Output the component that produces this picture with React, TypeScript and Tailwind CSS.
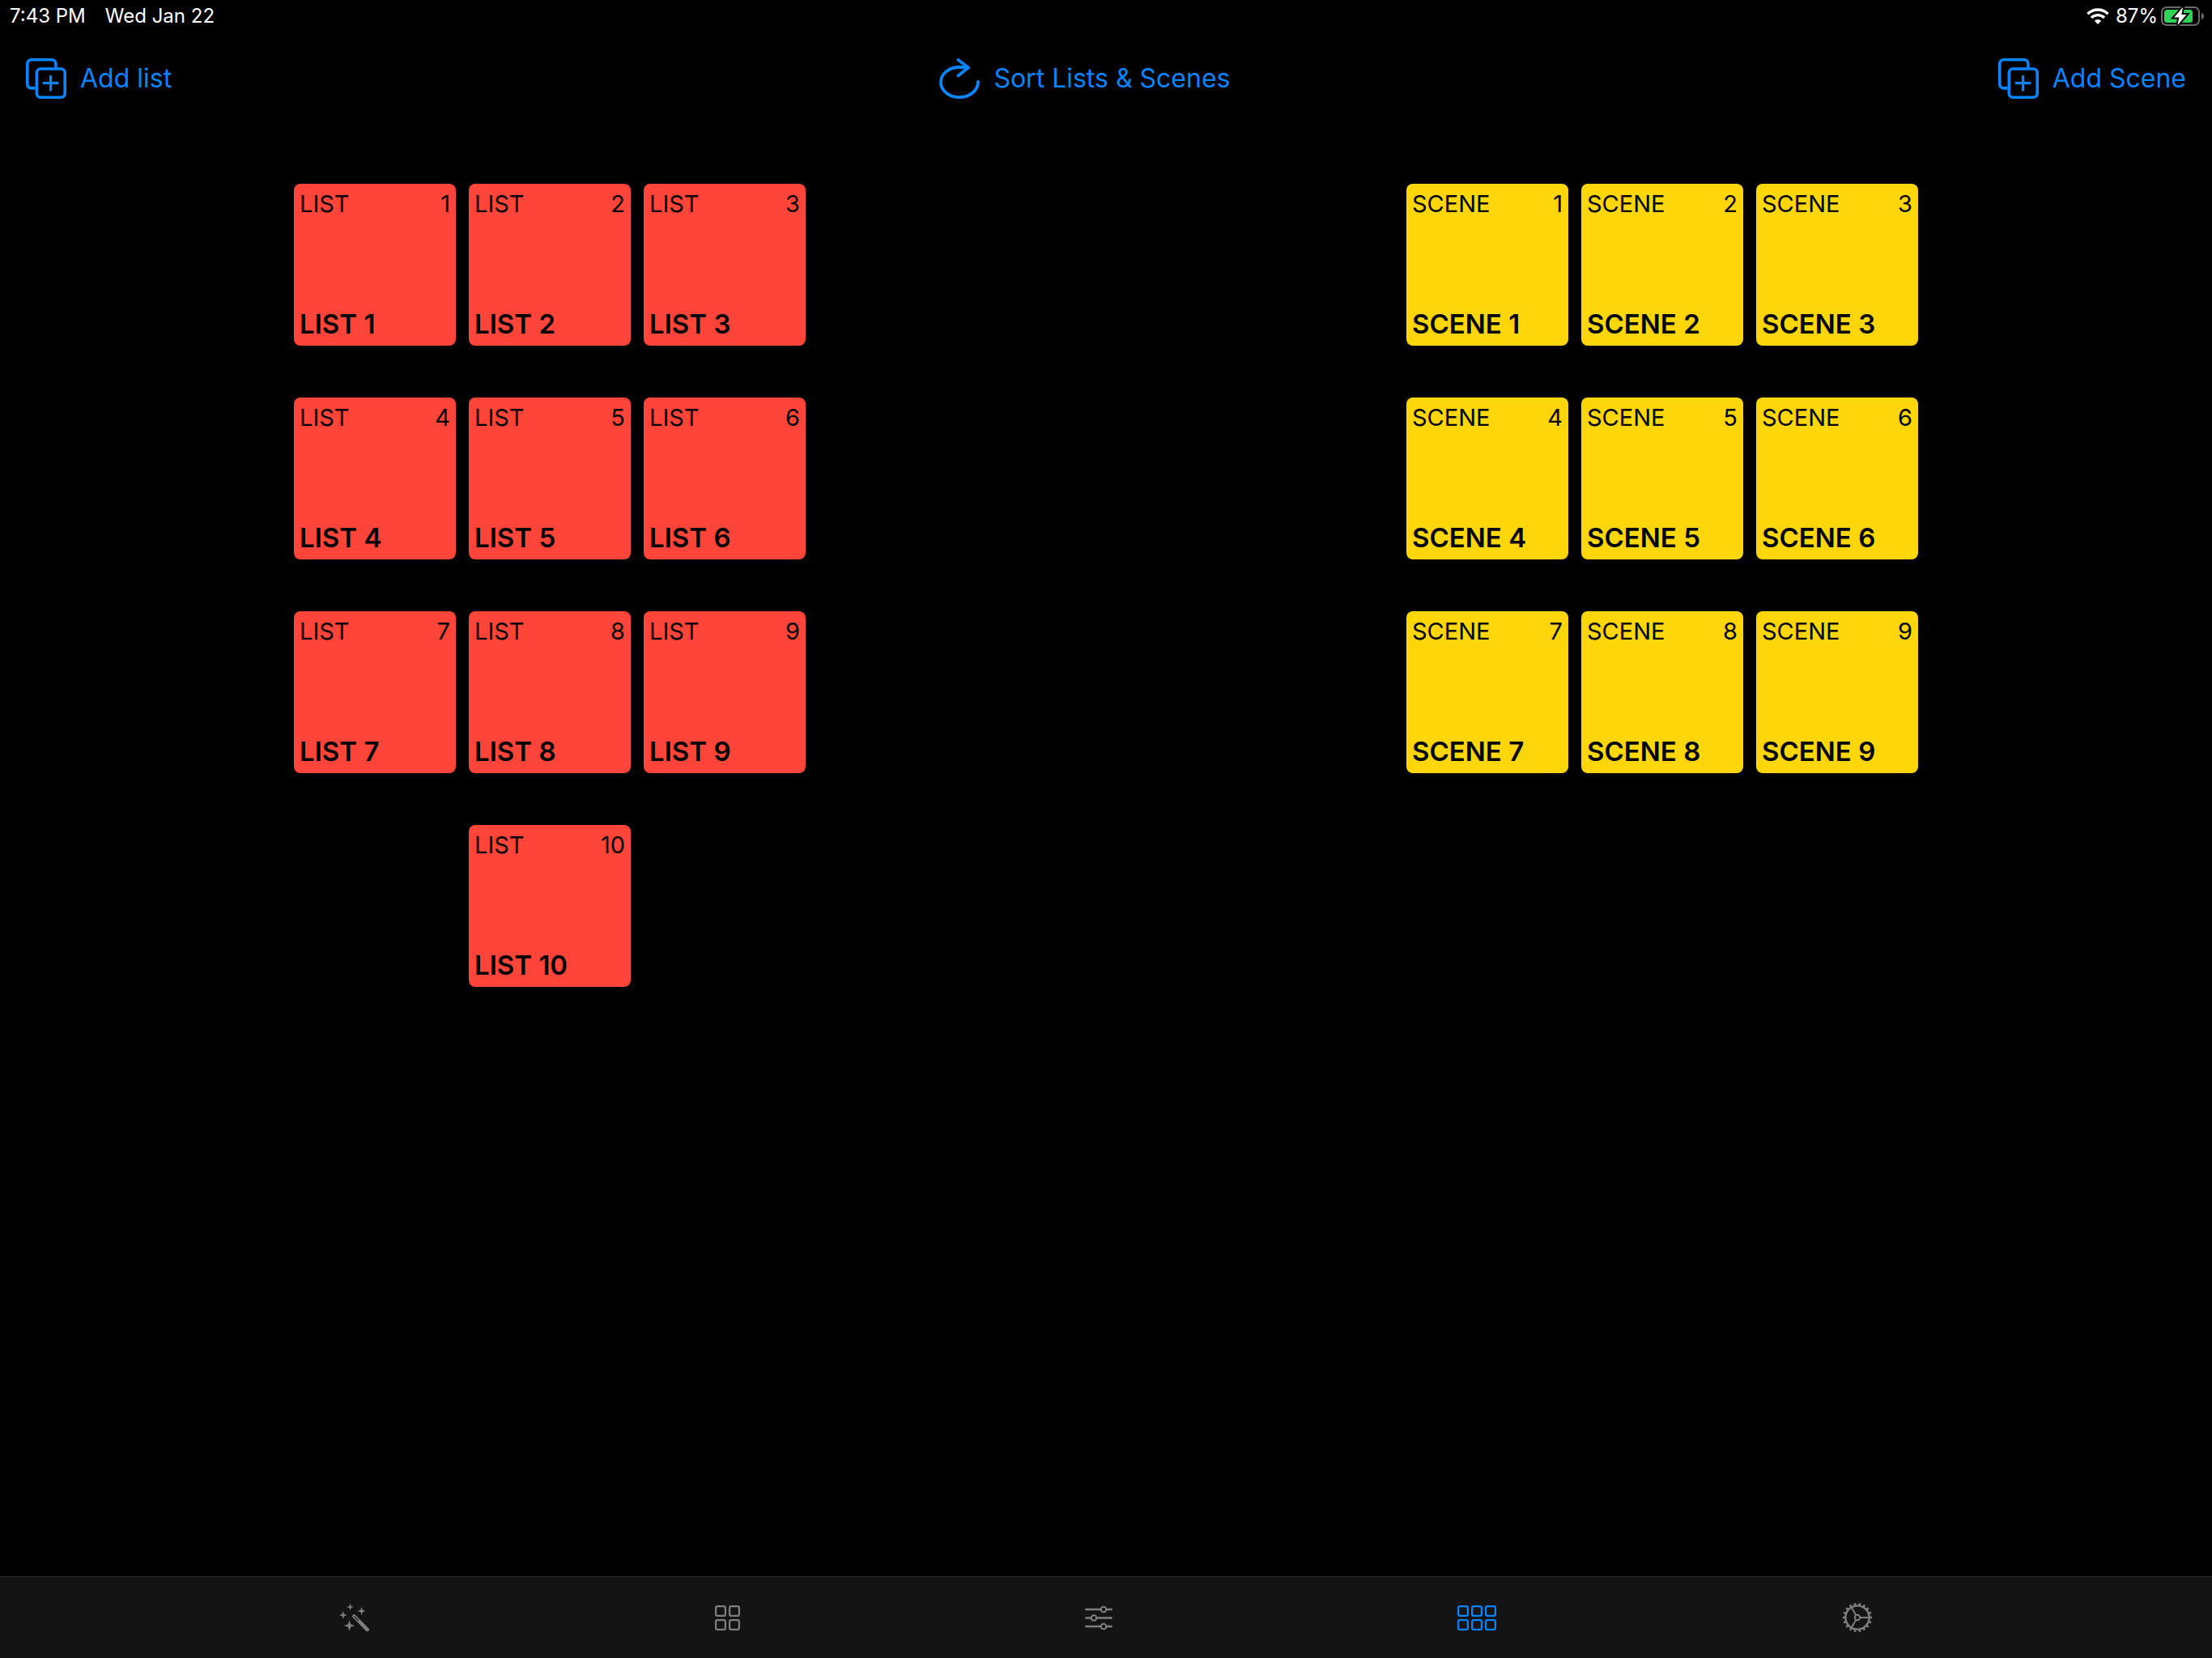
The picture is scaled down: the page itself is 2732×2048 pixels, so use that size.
import React from "react";

type TileKind = "list" | "scene";

const lists = Array.from({ length: 10 }, (_, i) => i + 1);
const scenes = Array.from({ length: 9 }, (_, i) => i + 1);

function AddIcon() {
  return (
    <svg width="50" height="50" viewBox="0 0 50 50" fill="none" stroke="currentColor" strokeWidth="3.6" aria-hidden="true">
      <path d="M36.9 11.5V6.6a4.8 4.8 0 0 0-4.8-4.8H6.6a4.8 4.8 0 0 0-4.8 4.8v25.5a4.8 4.8 0 0 0 4.8 4.8h5" />
      <rect x="13.3" y="13" width="34.9" height="35.2" rx="4.8" />
      <path d="M30.6 22.3v16.9M22.1 30.7h17" strokeWidth="3.2" strokeLinecap="round" />
    </svg>
  );
}

function RefreshIcon() {
  return (
    <svg width="50" height="50" viewBox="0 0 50 50" fill="none" stroke="currentColor" strokeWidth="3.8" strokeLinecap="round" strokeLinejoin="round" aria-hidden="true">
      <path d="M48 28.9C48 39.5 38 48.1 25 48.1S2 39.8 2 29.5 12 11 25 11c4.5 0 8.2.2 10.5.6" />
      <path d="M23.5 1.9 36 11.6 23.5 21.5" />
    </svg>
  );
}

function WifiIcon() {
  return (
    <svg width="28" height="20" viewBox="0 0 28 20" fill="none" stroke="#fff" strokeWidth="3.4" aria-hidden="true">
      <path d="M1.5 7.2a17.8 17.8 0 0 1 25 0" />
      <path d="M6 11.9a11.4 11.4 0 0 1 16 0" />
      <path d="M14 20l-4.2-4.3a6 6 0 0 1 8.4 0z" fill="#fff" stroke="none" />
    </svg>
  );
}

function BatteryIcon() {
  return (
    <svg width="54" height="24" viewBox="0 0 54 24" fill="none" aria-hidden="true">
      <rect x="1" y="1" width="46" height="22" rx="6" stroke="#6b6b6b" strokeWidth="2" />
      <path d="M50 8c2 .6 3 2 3 4s-1 3.4-3 4z" fill="#6b6b6b" />
      <rect x="4" y="4" width="35" height="16" rx="3.5" fill="#30d158" />
      <path d="M27.2.8 16.2 13.4h6.2L20.4 23.2 31.6 9.9h-6.3z" fill="#fff" stroke="#000" strokeWidth="4" />
      <path d="M27.2.8 16.2 13.4h6.2L20.4 23.2 31.6 9.9h-6.3z" fill="#fff" />
    </svg>
  );
}

function WandIcon() {
  const sparkle = (x: number, y: number, r: number) => {
    const k = r * 0.24;
    return `M${x} ${y - r}L${x + k} ${y - k}L${x + r} ${y}L${x + k} ${y + k}L${x} ${y + r}L${x - k} ${y + k}L${x - r} ${y}L${x - k} ${y - k}Z`;
  };
  return (
    <svg width="37" height="36" viewBox="0 0 37 36" fill="none" aria-hidden="true">
      <path
        fill="currentColor"
        d={[sparkle(13.5, 5, 4.5), sparkle(27.5, 10, 5.2), sparkle(4.8, 15, 5), sparkle(12.5, 28, 6.8)].join("")}
      />
      <path d="M18.5 16.5 34.6 32.8" stroke="currentColor" strokeWidth="4.6" strokeLinecap="round" />
      <path d="M19 17l4.5 4.5" stroke="#141414" strokeWidth="1.2" strokeLinecap="round" />
    </svg>
  );
}

function GridIcon({ columns }: { columns: number }) {
  const width = columns * 17 - 3;
  return (
    <svg width={width} height="31" viewBox={`0 0 ${width} 31`} fill="none" stroke="currentColor" strokeWidth="2.2" aria-hidden="true">
      {Array.from({ length: columns * 2 }, (_, i) => (
        <rect key={i} x={(i % columns) * 17 + 1.1} y={Math.floor(i / columns) * 17 + 1.1} width="11.8" height="11.8" rx="1.8" />
      ))}
    </svg>
  );
}

function SlidersIcon() {
  const rows = [
    { y: 5, knob: 23 },
    { y: 15.5, knob: 11 },
    { y: 26, knob: 23 },
  ];
  return (
    <svg width="34" height="31" viewBox="0 0 34 31" fill="none" stroke="currentColor" strokeWidth="2.4" strokeLinecap="round" aria-hidden="true">
      {rows.map(({ y, knob }) => (
        <g key={y}>
          <path d={`M1.2 ${y}H${knob - 3.3}M${knob + 3.3} ${y}H32.8`} />
          <circle cx={knob} cy={y} r="3.3" strokeWidth="2" />
        </g>
      ))}
    </svg>
  );
}

function GearIcon() {
  return (
    <svg width="38" height="38" viewBox="0 0 38 38" fill="none" stroke="currentColor" aria-hidden="true">
      <circle cx="19" cy="19" r="14.6" strokeWidth="2.4" />
      <circle cx="19" cy="19" r="3.2" strokeWidth="2" />
      {Array.from({ length: 18 }, (_, i) => (
        <path key={i} d="M19 4V.9" strokeWidth="2.6" transform={`rotate(${i * 20 + 10} 19 19)`} />
      ))}
      {[0, 120, 240].map((a) => (
        <path key={a} d="M22.5 19H33" strokeWidth="2" transform={`rotate(${a} 19 19)`} />
      ))}
    </svg>
  );
}

function ToolbarButton({ icon, children }: { icon: React.ReactNode; children: React.ReactNode }) {
  return (
    <button type="button" className="flex items-center gap-[17px] text-[32px] leading-[50px] text-[#0a84ff]">
      {icon}
      <span>{children}</span>
    </button>
  );
}

function Tile({ kind, n }: { kind: TileKind; n: number }) {
  const label = kind === "list" ? "LIST" : "SCENE";
  return (
    <button
      type="button"
      className={`flex size-[200px] flex-col justify-between rounded-lg p-[7px] text-left text-black ${
        kind === "list" ? "bg-[#ff453a]" : "bg-[#ffd60a]"
      }`}
    >
      <span className="flex w-full justify-between text-[29px] leading-9">
        <span>{label}</span>
        <span>{n}</span>
      </span>
      <span className="text-[33px] font-semibold leading-10">
        {label} {n}
      </span>
    </button>
  );
}

function Board({ kind, items, title }: { kind: TileKind; items: number[]; title: string }) {
  return (
    <section aria-label={title} className="flex flex-1 justify-center">
      <div className="flex max-w-[632px] flex-wrap content-start justify-center gap-x-4 gap-y-16">
        {items.map((n) => (
          <Tile key={n} kind={kind} n={n} />
        ))}
      </div>
    </section>
  );
}

const tabs = [
  { name: "Effects", icon: <WandIcon /> },
  { name: "Groups", icon: <GridIcon columns={2} /> },
  { name: "Faders", icon: <SlidersIcon /> },
  { name: "Lists and scenes", icon: <GridIcon columns={3} />, active: true },
  { name: "Settings", icon: <GearIcon /> },
];

export default function App() {
  return (
    <div className="flex min-h-screen flex-col bg-black font-['Inter',sans-serif]">
      <div className="flex h-10 items-center justify-between pr-[9px] pl-3 text-2xl text-white">
        <div className="flex gap-6">
          <span>7:43 PM</span>
          <span>Wed Jan 22</span>
        </div>
        <div className="flex items-center">
          <WifiIcon />
          <span className="pr-1 pl-2">87%</span>
          <BatteryIcon />
        </div>
      </div>

      <header className="flex items-center justify-between px-8 pt-8">
        <ToolbarButton icon={<AddIcon />}>Add list</ToolbarButton>
        <ToolbarButton icon={<RefreshIcon />}>Sort Lists &amp; Scenes</ToolbarButton>
        <ToolbarButton icon={<AddIcon />}>Add Scene</ToolbarButton>
      </header>

      <main className="flex flex-1 gap-4 pt-[105px]">
        <Board kind="list" items={lists} title="Lists" />
        <Board kind="scene" items={scenes} title="Scenes" />
      </main>

      <nav className="flex h-[101px] items-center justify-between border-t border-[#2a2a2a] bg-[#141414] px-[15.35%]">
        {tabs.map((tab) => (
          <button
            key={tab.name}
            type="button"
            aria-label={tab.name}
            aria-current={tab.active ? "page" : undefined}
            className={tab.active ? "text-[#0a84ff]" : "text-[#7f7f7f]"}
          >
            {tab.icon}
          </button>
        ))}
      </nav>
    </div>
  );
}
